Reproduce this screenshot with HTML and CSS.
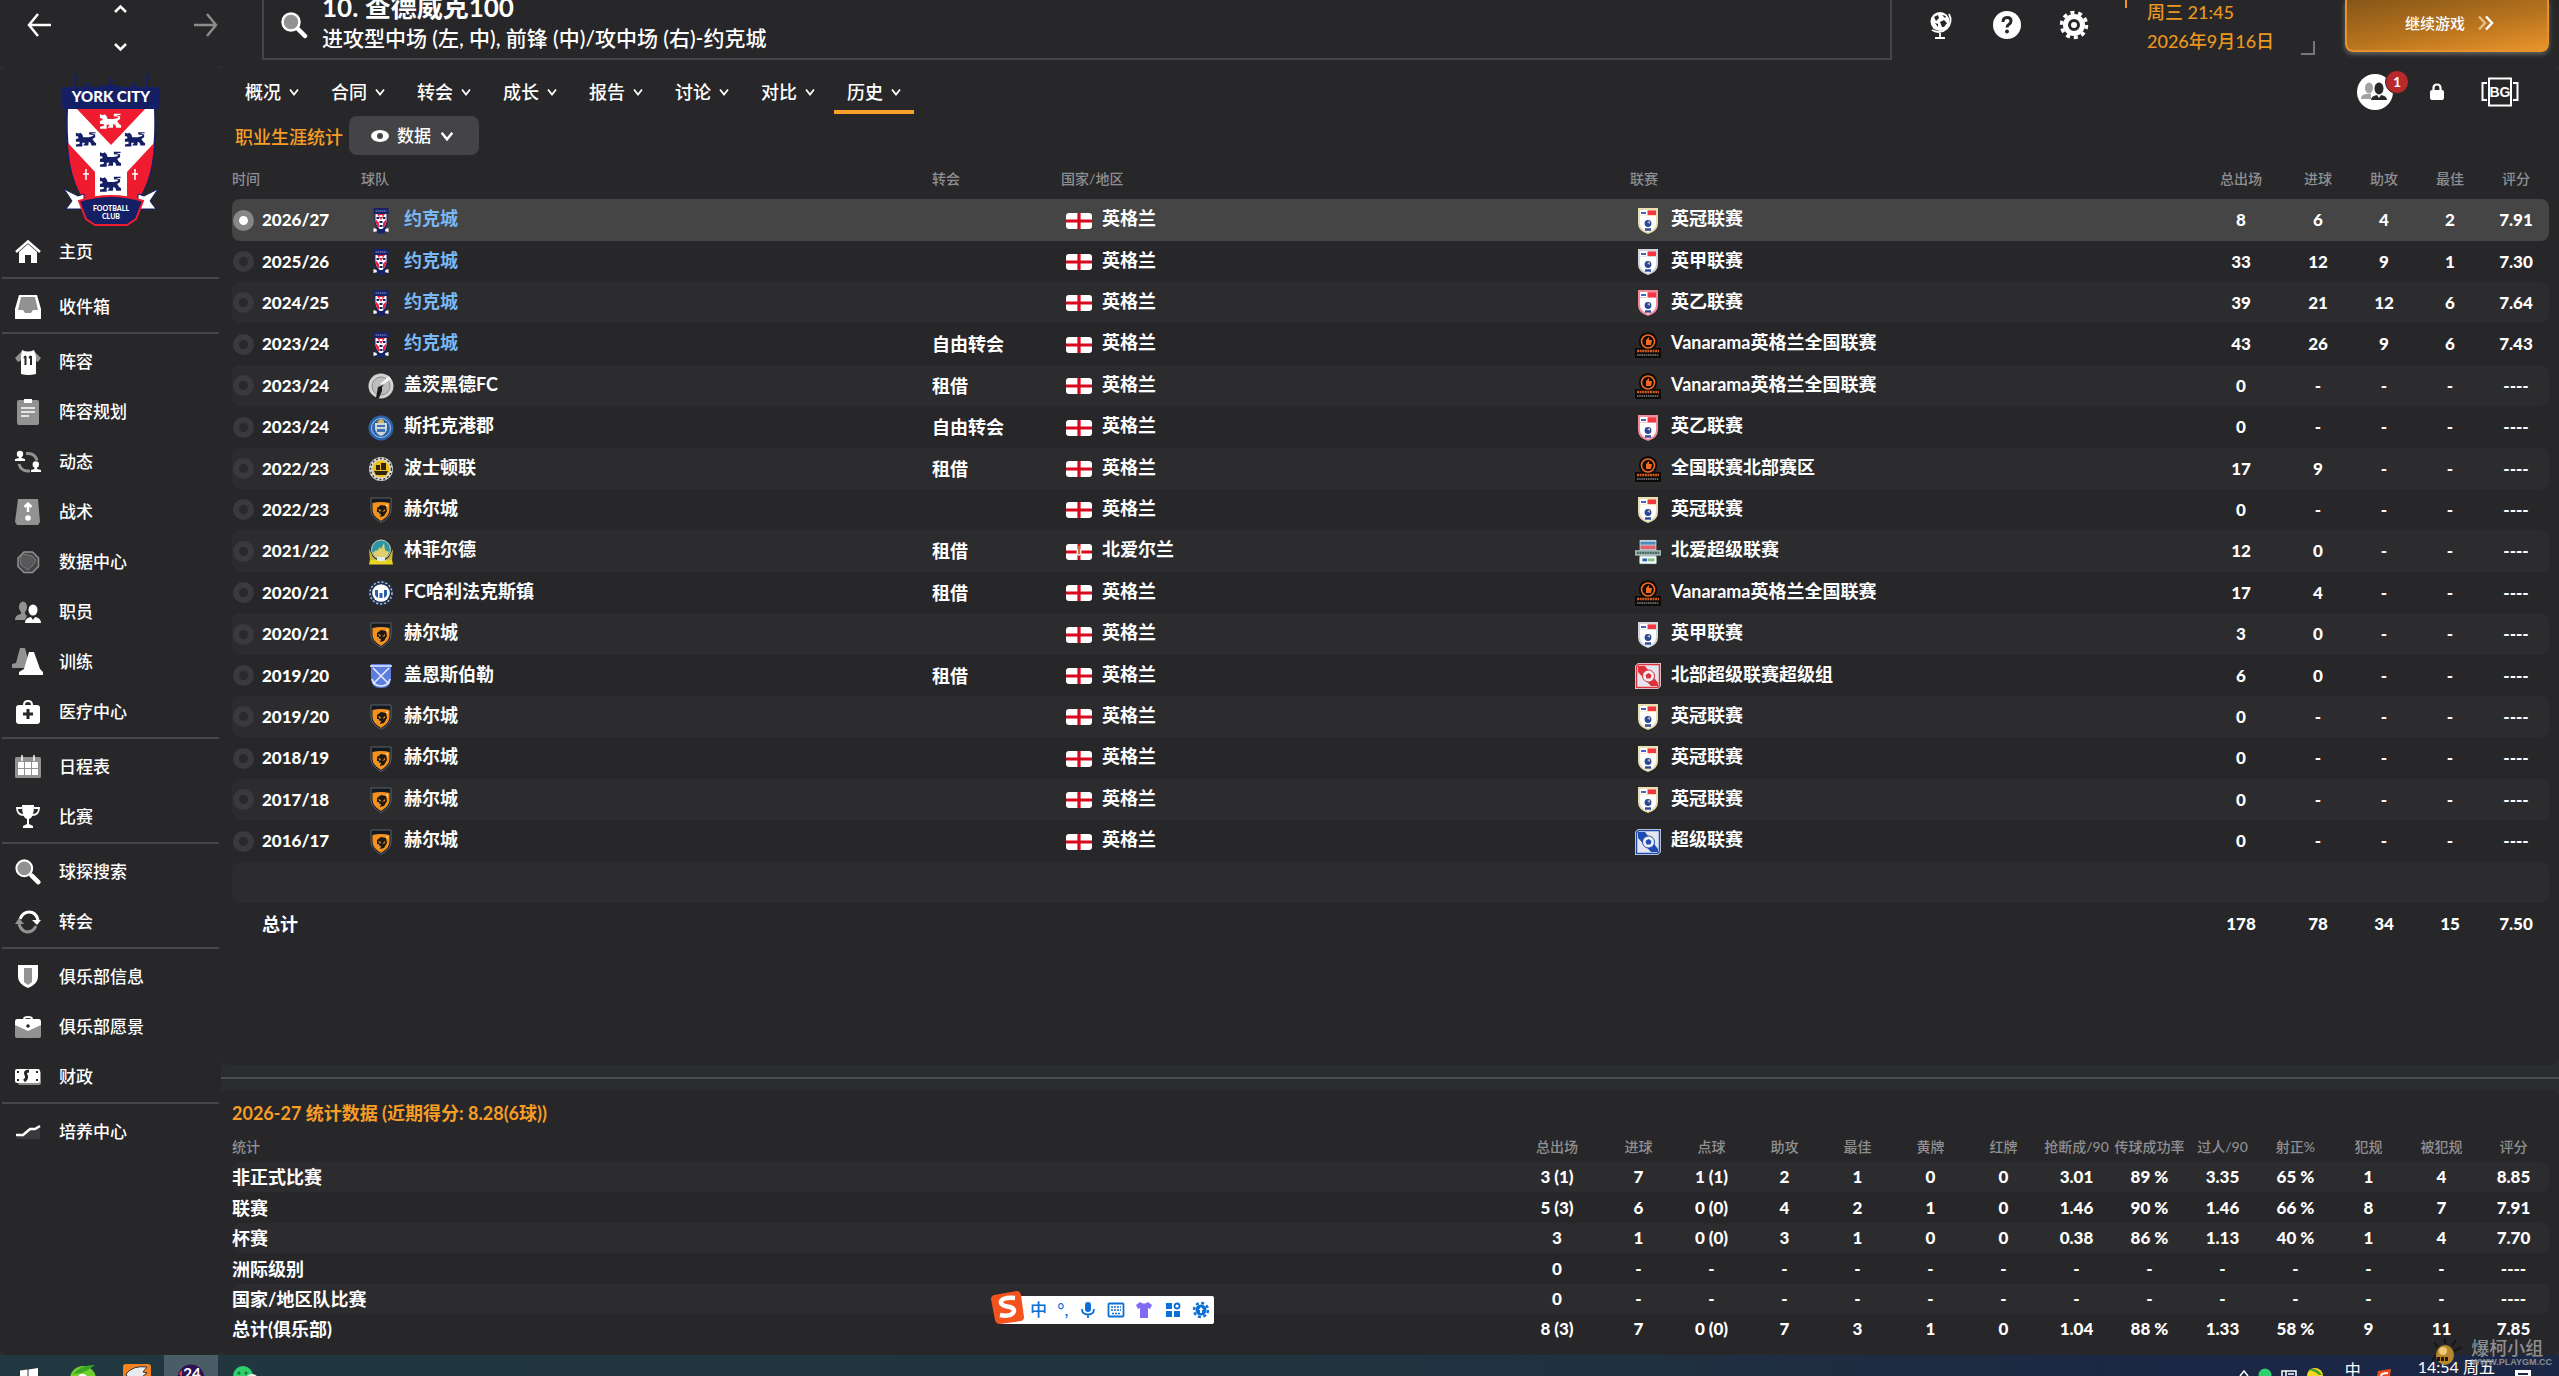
FILE: index.html
```html
<!DOCTYPE html>
<html lang="zh-CN">
<head>
<meta charset="utf-8">
<meta name="viewport" content="width=device-width, initial-scale=1">
<title>查德威克 - 历史</title>
<link rel="stylesheet" href="styles.css">
</head>
<body>
<svg class="sprite" aria-hidden="true">
  <symbol id="chev" viewBox="0 0 12 12"><path d="M2 3.500 6 8.500 10 3.500" fill="none" stroke="currentColor" stroke-width="1.800"/></symbol>
  <symbol id="lion" viewBox="0 0 24 17"><path d="M1 1l3 1 2-1 2 2 1 3h6l4-1 1.500-1.500-5-.5V0.500h7v1.200h-5l4.500 1.300v3l-3 2 2 3 2 1.500V15h-5l-1-3-2-1-.5 4H9l2-3H8v4H1v-2l4-1v-2H1V8l3-1-1-2H1z"/></symbol>
  <symbol id="york" viewBox="0 0 17 26"><path d="M1 0h15v5l-1 1v8q-1 6-4 9l-2 2h-1l-2-2q-3-3-4-9V6L1 5z" fill="#16236b"/><path d="M3 6h11v7q-1 6-5.500 9Q4 19 3 13z" fill="#fff"/><path d="M4.500 6h8l-4 6zM3 11l3.500 4v5Q3 17 3 11zM14 11l-3.500 4v5Q14 17 14 11z" fill="#e8203a"/><path d="M4 9h2.500v2H4zM10.500 9H13v2h-2.500zM7 13h3v2H7zM7 17h3v2H7z" fill="#16236b"/><path d="M7 7h3v2H7z" fill="#fff"/><path d="M3 3h11" stroke="#8f98c8" stroke-dasharray="1.500 .5"/><path d="M1 20l3 1h9l3-1v4l-4-1-3 1H8l-3-1-4 1z" fill="#fff"/><path d="M4 21h9l-1 4.500H5z" fill="#16236b"/></symbol>
  <symbol id="gates" viewBox="0 0 26 26"><circle cx="13" cy="13" r="12.500" fill="#d2d2d0"/><circle cx="13" cy="13" r="9" fill="#bdbdbb" stroke="#8b8b89"/><path d="M8 25l2-11 3-1 7-7-6 8 0 4-3 7z" fill="#1c1c1c"/><path d="M12 11l9-8 2 3-8 6z" fill="#f2f2f2"/></symbol>
  <symbol id="stock" viewBox="0 0 26 26"><circle cx="13" cy="13" r="12.500" fill="#2b62ac"/><circle cx="13" cy="13" r="9.500" fill="none" stroke="#a9c4e2"/><path d="M7 8h12v6q-1 5-6 7-5-2-6-7z" fill="#cfd6d6"/><path d="M9 10h8v2H9zM9 14h8v3H9z" fill="#3c72b5"/><path d="M10 6l3-2 3 2v2h-6z" fill="#d6b45c"/></symbol>
  <symbol id="boston" viewBox="0 0 26 26"><circle cx="13" cy="13" r="12" fill="#d8d8d4"/><circle cx="13" cy="13" r="10.500" fill="none" stroke="#3a3a38" stroke-width="1.500" stroke-dasharray="2 2"/><circle cx="13" cy="13" r="8.500" fill="#f0bf16"/><path d="M6 15h14l-2 4H8zM8 9h4v5H8zM13 7h5v7h-5z" fill="#2a2410"/></symbol>
  <symbol id="hull" viewBox="0 0 26 26"><path d="M3 1h20v12q0 7-10 12.500Q3 20 3 13z" fill="#14181f" stroke="#596270"/><path d="M4.500 6q8.500-2 17 0v7q0 6-8.500 11-8.500-5-8.500-11z" fill="#f5921e"/><path d="M9 11l4-3 5 1 1 5-3 5-4 1 1-3-4-1z" fill="#1c1a18"/><path d="M10 12l3 1-1 2zM14 15l3-3 0 2z" fill="#f5921e"/><path d="M18 8l1.500-1 0 3zM9 15l1.500 0 0 2z" fill="#fff"/></symbol>
  <symbol id="linfield" viewBox="0 0 26 26"><circle cx="13" cy="10.500" r="9.500" fill="#2f95a3" stroke="#c3d4cc"/><path d="M5 14l3-3 1 1 3-4 1 2 3-6 1 7 4 2-2 5H7z" fill="#e0cf6c"/><path d="M1 10l4 8 4 3-7 1zM25 10l-4 8-4 3 7 1z" fill="#c9b83c"/><path d="M2 21h22l1 4.500H1z" fill="#e9d422"/><path d="M9 18h8v4H9z" fill="#dfe9ee"/></symbol>
  <symbol id="halifax" viewBox="0 0 26 26"><circle cx="13" cy="13" r="12.500" fill="#1d3150"/><circle cx="13" cy="13" r="11" fill="none" stroke="#b8c4d2" stroke-width="1.500" stroke-dasharray="2 2"/><circle cx="13" cy="13" r="8.800" fill="#fff"/><path d="M7 10h3v8q-2-1-3-3zM16 10h3v5q-1 2-3 3zM11.500 13h3v5h-3z" fill="#2a5ea8"/></symbol>
  <symbol id="gains" viewBox="0 0 26 26"><path d="M3 1h20v14q0 10-10 10T3 15z" fill="#5c7de0"/><path d="M2 3h22M5 21L21 5M5 5l16 16M4 16q2 7 9 7t9-7" fill="none" stroke="#e4ebff" stroke-width="1.600"/></symbol>
  <symbol id="eng" viewBox="0 0 26 16"><rect width="26" height="16" rx="3" fill="#fff"/><path d="M0 8h26M13 0v16" stroke="#d8081f" stroke-width="3.200"/></symbol>
  <symbol id="nir" viewBox="0 0 26 16"><rect width="26" height="16" rx="3" fill="#fff"/><path d="M0 8h26M13 0v16" stroke="#d8081f" stroke-width="3"/><path d="M13 4l2.500 2v4L13 12l-2.500-2V6z" fill="#f0e6de"/><path d="M13 2v8" stroke="#c87038" stroke-width="2"/></symbol>
  <symbol id="efl" viewBox="0 0 26 26"><path d="M3 0h20v15q0 8-10 11Q3 23 3 15z" fill="currentColor"/><path d="M5 8h16v7q0 6-8 9-8-3-8-9z" fill="#fff"/><path d="M5 2h8v5.500H5z" fill="#fff"/><path d="M12.500 2.500h8.500v4.500h-8.500z" fill="#f3363f"/><path d="M6 5h5" stroke="#4066c8" stroke-width="2"/><circle cx="13" cy="15.500" r="3.400" fill="#2b4796"/><path d="M12 14l3-1 0 3z" fill="#d9c17e"/><path d="M10 21.500h6" stroke="#2b4796" stroke-width="2.400"/></symbol>
  <symbol id="van" viewBox="0 0 26 26"><path d="M13 0q9 1 9 9 0 4-2 7h6v10H0V16h6Q4 13 4 9 4 1 13 0z" fill="#0c0a09"/><circle cx="13" cy="9.500" r="6.500" fill="none" stroke="#f26a1c" stroke-width="1.600"/><path d="M11 8l3-3v3h3l-1 5h-5z" fill="#f26a1c"/><path d="M2 19h22" stroke="#d35a18" stroke-width="2.400" stroke-dasharray="2 .6"/><path d="M2 23h22" stroke="#858585" stroke-width="1.400" stroke-dasharray="1.500 .7"/></symbol>
  <symbol id="nifl" viewBox="0 0 28 26"><path d="M5 0h18v26H5z" fill="#b9d3dc"/><path d="M6 2h16v3H6z" fill="#4f8cbc"/><path d="M6 6h16v4H6z" fill="#e8606a"/><path d="M0 11h28v6H0z" fill="#9fb5ad"/><path d="M2 14h24" stroke="#40605a" stroke-width="2.400" stroke-dasharray="2 .8"/><path d="M5 18h18v7H5z" fill="#f5f7f5"/><path d="M8 21.500h5" stroke="#2860a8" stroke-width="3"/><path d="M14 21.500h7" stroke="#7fbf7a" stroke-width="3"/></symbol>
  <symbol id="card" viewBox="0 0 26 26"><path d="M3 0h23v23l-3 3H0V3z" fill="#e3e6ee"/><path d="M3.500 1.500h21v21l-2 2h-21v-21z" fill="none" stroke="currentColor" stroke-width="1.500"/><path d="M3 3h7l13 17v3h-7L3 9z" fill="currentColor"/><circle cx="13.500" cy="13" r="6" fill="#eef0f6" stroke="currentColor"/><path d="M13.500 10l3 2-1 3.500h-4l-1-3.500z" fill="currentColor"/></symbol>
</svg>

<div class="app">
<header class="top">
  <nav class="history-nav" aria-label="前进后退">
    <button class="icon-btn" aria-label="后退"><svg width="24" height="26" viewBox="0 0 24 26"><path d="M11 2 2 13l9 11M2 13h22" fill="none" stroke="#fff" stroke-width="2.500"/></svg></button>
    <div class="updown">
      <button class="icon-btn" aria-label="上一个"><svg width="15" height="10" viewBox="0 0 15 10"><path d="M2 8l5.500-5.500L13 8" fill="none" stroke="#fff" stroke-width="2.500"/></svg></button>
      <button class="icon-btn" aria-label="下一个"><svg width="15" height="10" viewBox="0 0 15 10"><path d="M2 2l5.500 5.500L13 2" fill="none" stroke="#fff" stroke-width="2.500"/></svg></button>
    </div>
    <button class="icon-btn" aria-label="前进"><svg width="24" height="26" viewBox="0 0 24 26"><path d="M13 2l9 11-9 11M22 13H0" fill="none" stroke="#8b8b8c" stroke-width="2.500"/></svg></button>
  </nav>
  <div class="title-box">
    <svg class="search" width="28" height="28" viewBox="0 0 28 28"><circle cx="11" cy="11" r="8.500" fill="#929292" stroke="#fff" stroke-width="2.500"/><path d="M18 18l7 7" stroke="#fff" stroke-width="4.500" stroke-linecap="round"/></svg>
    <div>
      <h1>10. 查德威克100</h1>
      <p>进攻型中场 (左, 中), 前锋 (中)/攻中场 (右)-约克城</p>
    </div>
  </div>
  <div class="tools">
    <button class="icon-btn" aria-label="世界"><svg width="28" height="30" viewBox="0 0 28 30"><circle cx="13" cy="11.500" r="9.500" fill="#fff"/><path d="M7 7l4-2 1 3-3 3zM13 12l4-2 3 3-3 4-2 0zM8 13l3 1 0 3zM15 5l4 1-1 2z" fill="#27272a"/><path d="M22 4a12 12 0 0 1-17 16M13 23v4M8 28h10" fill="none" stroke="#fff" stroke-width="1.800"/></svg></button>
    <button class="icon-btn" aria-label="帮助"><svg width="30" height="30" viewBox="0 0 30 30"><circle cx="15" cy="15" r="14" fill="#fff"/><path d="M11 12q0-4.500 4-4.500t4 3.500q0 2-2 3.200t-2 3.300" fill="none" stroke="#27272a" stroke-width="3"/><circle cx="15" cy="21.500" r="2" fill="#27272a"/></svg></button>
    <button class="icon-btn" aria-label="设置"><svg width="30" height="30" viewBox="0 0 30 30"><circle cx="15" cy="15" r="11" fill="#fff"/><circle cx="15" cy="15" r="12.500" fill="none" stroke="#fff" stroke-width="3.500" stroke-dasharray="4 3.850"/><circle cx="15" cy="15" r="4.500" fill="none" stroke="#27272a" stroke-width="3"/></svg></button>
  </div>
  <div class="date">
    <time datetime="2026-09-16T21:45">周三 21:45<br>2026年9月16日</time>
  </div>
  <button class="continue">继续游戏
    <svg width="18" height="16" viewBox="0 0 18 16"><path d="M2 1.500 8 8l-6 6.500" fill="none" stroke="#e6bd83" stroke-width="2.500"/><path d="M9 1.500 15 8l-6 6.500" fill="none" stroke="#fff" stroke-width="2.500"/></svg>
  </button>
</header>

<div class="body">
<aside class="side">
  <svg class="crest" width="98" height="154" viewBox="0 0 98 154" role="img" aria-label="York City Football Club">
    <path d="M0 14h24v-4h4v4h12v-2h18v2h12v-4h4v4h24v20l-5 4H5l-5-4zM13 0l2 5-1 2v8h-2V7l-1-2zM49 3l2 5-1 2v6h-2v-6l-1-2zM85 0l2 5-1 2v8h-2V7l-1-2z" fill="#141f66"/>
    <path d="M4 36h90q2 50-9 76-12 26-36 38Q25 138 13 112 2 86 4 36z" fill="#141f66"/>
    <path d="M6 36h86q2 48-9 74-10 24-34 36Q25 134 15 110 4 84 6 36z" fill="#fff"/>
    <path d="M15 36h68L49 72zM6 70l27 29v40Q8 118 6 70zM92 70L65 99v40Q90 118 92 70z" fill="#ee1c2e"/>
    <g fill="#141f66"><use href="#lion" x="13" y="58" width="22" height="17"/><use href="#lion" x="62" y="58" width="22" height="17"/><use href="#lion" x="37" y="78" width="23" height="17"/><use href="#lion" x="37" y="103" width="23" height="17"/></g>
    <use href="#lion" x="37" y="40" width="23" height="17" fill="#fff"/>
    <path d="M24 96v11M21 101h6M73 96v11M70 101h6" stroke="#fff" stroke-width="1.500"/>
    <path d="M2 116l14 7 6-2v15l-18 0 6-8zM96 116l-14 7-6-2v15h18l-6-8z" fill="#fff" stroke="#141f66"/>
    <path d="M17 128q32-10 64 0l-7 18-9 6H33l-9-6z" fill="#141f66" stroke="#ee1c2e" stroke-width="2"/>
    <text x="49" y="29" class="crest-name">YORK CITY</text>
    <text x="49" y="138" class="crest-sub">FOOTBALL</text>
    <text x="49" y="146" class="crest-sub">CLUB</text>
  </svg>
  <ul class="menu">
    <li><a href="#"><svg viewBox="0 0 26 26"><path d="M13 5l9 8v11h-6v-8h-6v8H4V13z" fill="#fff"/><path d="M1 13L13 2.500 25 13" fill="none" stroke="#fff" stroke-width="2.500"/></svg>主页</a></li>
    <li class="sep"><a href="#"><svg viewBox="0 0 26 26"><path d="M4 1h18l4 14v10H0V15z" fill="#fff"/><path d="M6 3h14l3 13h-5l-2 3h-6l-2-3H3z" fill="#929292"/></svg>收件箱</a></li>
    <li class="sep"><a href="#"><svg viewBox="0 0 26 26"><path d="M7 2L0 9l3 4 4-2zM19 2l7 7-3 4-4-2z" fill="#929292"/><path d="M7 1q6 3 12 0l2 6v18q-8 2-15 0V7z" fill="#fff"/><path d="M10.500 7v9M16 7v9M9 9l2-2M14 9l2-2" stroke="#27272a" stroke-width="2" fill="none"/></svg>阵容</a></li>
    <li><a href="#"><svg viewBox="0 0 26 26"><rect x="2" y="1" width="22" height="25" rx="2" fill="#929292"/><rect x="9" y="0" width="8" height="4" fill="#fff"/><path d="M6 9h14M6 13h14M6 17h8" stroke="#fff" stroke-width="1.500"/></svg>阵容规划</a></li>
    <li><a href="#"><svg viewBox="0 0 26 26"><path d="M11 4.500q9-1 11 7M15 22q-9 1-11-7" fill="none" stroke="#929292" stroke-width="3"/><circle cx="5" cy="5" r="3.200" fill="#fff"/><path d="M4 7h2.500v2l3.500 1v2H0v-2l4-1zM19.500 18H22v2l4 1v2H16v-2l3.500-1z" fill="#fff"/><circle cx="20.800" cy="15.500" r="3.200" fill="#fff"/></svg>动态</a></li>
    <li><a href="#"><svg viewBox="0 0 26 26"><path d="M3 0h20l2 23-2 3H2l-2-3z" fill="#929292"/><circle cx="13" cy="19" r="2.800" fill="#fff"/><path d="M13 13V5M9.500 8L13 4.500 16.500 8" fill="none" stroke="#fff" stroke-width="2.500"/></svg>战术</a></li>
    <li><a href="#"><svg viewBox="0 0 26 26"><path d="M9 3h8.500l6 6v8.500l-6 6H9l-6-6V9z" fill="#454547" stroke="#929292" stroke-width="1.500"/><path d="M8 5l9 2 4 4-3 5-5 5-7-5-1-6z" fill="#58585a" stroke="#7a7a7c"/></svg>数据中心</a></li>
    <li><a href="#"><svg viewBox="0 0 26 26"><ellipse cx="8" cy="8" rx="4" ry="5.500" fill="#929292"/><path d="M0 21q0-5 6-6v-3h4v3l2 2-2 4z" fill="#929292"/><ellipse cx="18" cy="11" rx="4.500" ry="5.500" fill="#fff"/><path d="M10 24q0-5 6-6l2 3 2-3q6 1 6 6z" fill="#fff"/></svg>职员</a></li>
    <li><a href="#"><svg class="wide" viewBox="0 0 32 28"><path d="M8 0h5l4 15v5H0v-4l4-1z" fill="#929292"/><path d="M17 4h5l6 17 3 3v3H7v-3l5-3z" fill="#fff"/></svg>训练</a></li>
    <li><a href="#"><svg viewBox="0 0 26 26"><rect x="1" y="6" width="24" height="19" rx="3" fill="#fff"/><path d="M9 6q0-4 4-4t4 4" fill="none" stroke="#fff" stroke-width="2"/><path d="M13 10v10M8 15h10" stroke="#27272a" stroke-width="3"/></svg>医疗中心</a></li>
    <li class="sep"><a href="#"><svg viewBox="0 0 26 26"><rect x="0" y="3" width="26" height="21" rx="1.500" fill="#929292"/><path d="M7 1v6M19 1v6" stroke="#fff" stroke-width="1.500"/><path d="M3 8h6v6H3zM10 8h6v6h-6zM17 8h6v6h-6zM3 15h6v6H3zM10 15h6v6h-6zM17 15h6v6h-6z" fill="#fff"/></svg>日程表</a></li>
    <li><a href="#"><svg viewBox="0 0 26 26"><path d="M7 1h12q0 13-5 14v5l4 2v2H8v-2l4-2v-5Q7 14 7 1z" fill="#fff"/><path d="M7 4H2q0 7 7 7M19 4h5q0 7-7 7" fill="none" stroke="#fff" stroke-width="1.800"/></svg>比赛</a></li>
    <li class="sep"><a href="#"><svg viewBox="0 0 28 28"><circle cx="10" cy="10" r="8.500" fill="#929292" stroke="#fff" stroke-width="2.200"/><path d="M18 18l7 7" stroke="#fff" stroke-width="5" stroke-linecap="round"/></svg>球探搜索</a></li>
    <li><a href="#"><svg viewBox="0 0 26 26"><path d="M5 10q3-7 9-7 7 0 9 8" fill="none" stroke="#fff" stroke-width="3"/><path d="M17 11h9l-4 5z" fill="#fff"/><path d="M21 17q-3 6-9 6-6-1-8-8" fill="none" stroke="#929292" stroke-width="3"/><path d="M0 15h9l-5-6z" fill="#929292"/></svg>转会</a></li>
    <li class="sep"><a href="#"><svg viewBox="0 0 26 26"><path d="M3 1h20v12q0 7-10 11Q3 20 3 13z" fill="#fff"/><path d="M9 4h8v14l-4 3-4-3z" fill="#929292"/></svg>俱乐部信息</a></li>
    <li><a href="#"><svg viewBox="0 0 26 26"><path d="M0 8h26v14q0 2-2 2H2q-2 0-2-2z" fill="#929292"/><path d="M0 8q0-3 2-3h22q2 0 2 3v3l-13 6L0 11z" fill="#fff"/><path d="M9 5q0-2 4-2t4 2" fill="none" stroke="#fff" stroke-width="2"/><circle cx="13" cy="12" r="1.800" fill="#27272a"/></svg>俱乐部愿景</a></li>
    <li><a href="#"><svg viewBox="0 0 26 26"><rect x="3" y="7" width="23" height="14" rx="2" fill="#929292"/><rect x="0" y="5" width="25" height="14" rx="2" fill="#fff"/><path d="M14 7q-5 0-3 4 2 3-2 6" fill="none" stroke="#27272a" stroke-width="3"/><path d="M2 7h2v2H2zM21 7h2v2h-2zM2 15h2v2H2zM21 15h2v2h-2z" fill="#27272a"/></svg>财政</a></li>
    <li class="sep"><a href="#"><svg viewBox="0 0 26 26"><path d="M2 16h7l6-6h5l5-3v13H2z" fill="#3a3a3c"/><path d="M1 16h7l7-6h5l5-3" fill="none" stroke="#fff" stroke-width="2.500"/></svg>培养中心</a></li>
  </ul>
</aside>

<main class="main">
<section class="panel career">
  <div class="tabbar">
    <nav class="tabs">
      <a href="#">概况<svg><use href="#chev"/></svg></a>
      <a href="#">合同<svg><use href="#chev"/></svg></a>
      <a href="#">转会<svg><use href="#chev"/></svg></a>
      <a href="#">成长<svg><use href="#chev"/></svg></a>
      <a href="#">报告<svg><use href="#chev"/></svg></a>
      <a href="#">讨论<svg><use href="#chev"/></svg></a>
      <a href="#">对比<svg><use href="#chev"/></svg></a>
      <a href="#" class="on" aria-current="page">历史<svg><use href="#chev"/></svg></a>
    </nav>
    <div class="quick">
      <button class="icon-btn people" aria-label="职员"><svg width="36" height="36" viewBox="0 0 36 36"><circle cx="18" cy="18" r="18" fill="#fff"/><ellipse cx="12" cy="14" rx="4" ry="5.500" fill="#a2a2a2"/><path d="M4 25q0-5 6-5h4v5z" fill="#a2a2a2"/><ellipse cx="22" cy="14.500" rx="4.500" ry="6" fill="#27272a"/><path d="M14 26q0-4 6-5l2 3 2-3q6 1 6 5z" fill="#27272a"/></svg><span class="badge">1</span></button>
      <button class="icon-btn" aria-label="锁定"><svg width="16" height="18" viewBox="0 0 16 18"><rect x="1" y="7" width="14" height="10" rx="2" fill="#fff"/><path d="M4.500 8V5q0-3.500 3.500-3.500T11.500 5v3" fill="none" stroke="#fff" stroke-width="2.200"/></svg></button>
      <button class="icon-btn bg" aria-label="BG"><svg width="38" height="30" viewBox="0 0 38 30"><rect x="8" y="1.500" width="22" height="27" fill="none" stroke="#fff" stroke-width="2"/><path d="M6 6H1.500v17H6M32 6h4.500v17H32" fill="none" stroke="#fff" stroke-width="2"/><text x="19" y="20" text-anchor="middle">BG</text></svg></button>
    </div>
  </div>
  <div class="subbar">
    <h2>职业生涯统计</h2>
    <button class="filter"><svg width="18" height="14" viewBox="0 0 18 14"><ellipse cx="9" cy="7" rx="9" ry="6" fill="#fff"/><circle cx="9" cy="7" r="3" fill="#444446"/></svg>数据<svg width="16" height="16"><use href="#chev"/></svg></button>
  </div>
  <table class="career-table">
    <colgroup><col class="c-time"><col><col class="c-time"><col><col><col class="c-apps"><col class="c-num"><col class="c-num"><col class="c-num"><col class="c-num"></colgroup>
    <thead><tr><th>时间</th><th>球队</th><th>转会</th><th>国家/地区</th><th>联赛</th><th>总出场</th><th>进球</th><th>助攻</th><th>最佳</th><th>评分</th></tr></thead>
    <tbody>
      <tr class="sel"><td><label><input type="radio" name="s" checked>2026/27</label></td><td><svg><use href="#york"/></svg><a href="#">约克城</a></td><td></td><td><svg><use href="#eng"/></svg>英格兰</td><td><svg class="champ"><use href="#efl"/></svg>英冠联赛</td><td>8</td><td>6</td><td>4</td><td>2</td><td>7.91</td></tr>
      <tr><td><label><input type="radio" name="s">2025/26</label></td><td><svg><use href="#york"/></svg><a href="#">约克城</a></td><td></td><td><svg><use href="#eng"/></svg>英格兰</td><td><svg class="one"><use href="#efl"/></svg>英甲联赛</td><td>33</td><td>12</td><td>9</td><td>1</td><td>7.30</td></tr>
      <tr><td><label><input type="radio" name="s">2024/25</label></td><td><svg><use href="#york"/></svg><a href="#">约克城</a></td><td></td><td><svg><use href="#eng"/></svg>英格兰</td><td><svg class="two"><use href="#efl"/></svg>英乙联赛</td><td>39</td><td>21</td><td>12</td><td>6</td><td>7.64</td></tr>
      <tr><td><label><input type="radio" name="s">2023/24</label></td><td><svg><use href="#york"/></svg><a href="#">约克城</a></td><td>自由转会</td><td><svg><use href="#eng"/></svg>英格兰</td><td><svg><use href="#van"/></svg>Vanarama英格兰全国联赛</td><td>43</td><td>26</td><td>9</td><td>6</td><td>7.43</td></tr>
      <tr><td><label><input type="radio" name="s">2023/24</label></td><td><svg><use href="#gates"/></svg>盖茨黑德FC</td><td>租借</td><td><svg><use href="#eng"/></svg>英格兰</td><td><svg><use href="#van"/></svg>Vanarama英格兰全国联赛</td><td>0</td><td>-</td><td>-</td><td>-</td><td>----</td></tr>
      <tr><td><label><input type="radio" name="s">2023/24</label></td><td><svg><use href="#stock"/></svg>斯托克港郡</td><td>自由转会</td><td><svg><use href="#eng"/></svg>英格兰</td><td><svg class="two"><use href="#efl"/></svg>英乙联赛</td><td>0</td><td>-</td><td>-</td><td>-</td><td>----</td></tr>
      <tr><td><label><input type="radio" name="s">2022/23</label></td><td><svg><use href="#boston"/></svg>波士顿联</td><td>租借</td><td><svg><use href="#eng"/></svg>英格兰</td><td><svg><use href="#van"/></svg>全国联赛北部赛区</td><td>17</td><td>9</td><td>-</td><td>-</td><td>----</td></tr>
      <tr><td><label><input type="radio" name="s">2022/23</label></td><td><svg><use href="#hull"/></svg>赫尔城</td><td></td><td><svg><use href="#eng"/></svg>英格兰</td><td><svg class="champ"><use href="#efl"/></svg>英冠联赛</td><td>0</td><td>-</td><td>-</td><td>-</td><td>----</td></tr>
      <tr><td><label><input type="radio" name="s">2021/22</label></td><td><svg><use href="#linfield"/></svg>林菲尔德</td><td>租借</td><td><svg><use href="#nir"/></svg>北爱尔兰</td><td><svg><use href="#nifl"/></svg>北爱超级联赛</td><td>12</td><td>0</td><td>-</td><td>-</td><td>----</td></tr>
      <tr><td><label><input type="radio" name="s">2020/21</label></td><td><svg><use href="#halifax"/></svg>FC哈利法克斯镇</td><td>租借</td><td><svg><use href="#eng"/></svg>英格兰</td><td><svg><use href="#van"/></svg>Vanarama英格兰全国联赛</td><td>17</td><td>4</td><td>-</td><td>-</td><td>----</td></tr>
      <tr><td><label><input type="radio" name="s">2020/21</label></td><td><svg><use href="#hull"/></svg>赫尔城</td><td></td><td><svg><use href="#eng"/></svg>英格兰</td><td><svg class="one"><use href="#efl"/></svg>英甲联赛</td><td>3</td><td>0</td><td>-</td><td>-</td><td>----</td></tr>
      <tr><td><label><input type="radio" name="s">2019/20</label></td><td><svg><use href="#gains"/></svg>盖恩斯伯勒</td><td>租借</td><td><svg><use href="#eng"/></svg>英格兰</td><td><svg class="red"><use href="#card"/></svg>北部超级联赛超级组</td><td>6</td><td>0</td><td>-</td><td>-</td><td>----</td></tr>
      <tr><td><label><input type="radio" name="s">2019/20</label></td><td><svg><use href="#hull"/></svg>赫尔城</td><td></td><td><svg><use href="#eng"/></svg>英格兰</td><td><svg class="champ"><use href="#efl"/></svg>英冠联赛</td><td>0</td><td>-</td><td>-</td><td>-</td><td>----</td></tr>
      <tr><td><label><input type="radio" name="s">2018/19</label></td><td><svg><use href="#hull"/></svg>赫尔城</td><td></td><td><svg><use href="#eng"/></svg>英格兰</td><td><svg class="champ"><use href="#efl"/></svg>英冠联赛</td><td>0</td><td>-</td><td>-</td><td>-</td><td>----</td></tr>
      <tr><td><label><input type="radio" name="s">2017/18</label></td><td><svg><use href="#hull"/></svg>赫尔城</td><td></td><td><svg><use href="#eng"/></svg>英格兰</td><td><svg class="champ"><use href="#efl"/></svg>英冠联赛</td><td>0</td><td>-</td><td>-</td><td>-</td><td>----</td></tr>
      <tr><td><label><input type="radio" name="s">2016/17</label></td><td><svg><use href="#hull"/></svg>赫尔城</td><td></td><td><svg><use href="#eng"/></svg>英格兰</td><td><svg class="blue"><use href="#card"/></svg>超级联赛</td><td>0</td><td>-</td><td>-</td><td>-</td><td>----</td></tr>
      <tr><td></td><td></td><td></td><td></td><td></td><td></td><td></td><td></td><td></td><td></td></tr>
      <tr class="total"><td>总计</td><td></td><td></td><td></td><td></td><td>178</td><td>78</td><td>34</td><td>15</td><td>7.50</td></tr>
    </tbody>
  </table>
</section>

<hr class="divider">

<section class="panel season">
  <h2>2026-27 统计数据 (近期得分: 8.28(6球))</h2>
  <table class="season-table">
    <colgroup><col><col class="s-apps"><col class="s-num" span="12"><col class="s-last"></colgroup>
    <thead><tr><th>统计</th><th>总出场</th><th>进球</th><th>点球</th><th>助攻</th><th>最佳</th><th>黄牌</th><th>红牌</th><th>抢断成/90</th><th>传球成功率</th><th>过人/90</th><th>射正%</th><th>犯规</th><th>被犯规</th><th>评分</th></tr></thead>
    <tbody>
      <tr><td>非正式比赛</td><td>3 (1)</td><td>7</td><td>1 (1)</td><td>2</td><td>1</td><td>0</td><td>0</td><td>3.01</td><td>89 %</td><td>3.35</td><td>65 %</td><td>1</td><td>4</td><td>8.85</td></tr>
      <tr><td>联赛</td><td>5 (3)</td><td>6</td><td>0 (0)</td><td>4</td><td>2</td><td>1</td><td>0</td><td>1.46</td><td>90 %</td><td>1.46</td><td>66 %</td><td>8</td><td>7</td><td>7.91</td></tr>
      <tr><td>杯赛</td><td>3</td><td>1</td><td>0 (0)</td><td>3</td><td>1</td><td>0</td><td>0</td><td>0.38</td><td>86 %</td><td>1.13</td><td>40 %</td><td>1</td><td>4</td><td>7.70</td></tr>
      <tr><td>洲际级别</td><td>0</td><td>-</td><td>-</td><td>-</td><td>-</td><td>-</td><td>-</td><td>-</td><td>-</td><td>-</td><td>-</td><td>-</td><td>-</td><td>----</td></tr>
      <tr><td>国家/地区队比赛</td><td>0</td><td>-</td><td>-</td><td>-</td><td>-</td><td>-</td><td>-</td><td>-</td><td>-</td><td>-</td><td>-</td><td>-</td><td>-</td><td>----</td></tr>
      <tr><td>总计(俱乐部)</td><td>8 (3)</td><td>7</td><td>0 (0)</td><td>7</td><td>3</td><td>1</td><td>0</td><td>1.04</td><td>88 %</td><td>1.33</td><td>58 %</td><td>9</td><td>11</td><td>7.85</td></tr>
    </tbody>
  </table>
</section>
</main>
</div>

<footer class="taskbar">
  <div class="apps">
    <button class="task" aria-label="开始"><svg width="18" height="18" viewBox="0 0 18 18"><path d="M0 2.500 7.500 1.500V8.500H0zM8.500 1.400 18 0v8.500H8.500zM0 9.500h7.500v7L0 15.500zM8.500 9.500H18V18l-9.500-1.400z" fill="#fff"/></svg></button>
    <button class="task" aria-label="浏览器"><svg width="28" height="28" viewBox="0 0 28 28"><circle cx="14" cy="15" r="13" fill="#6fcf2e"/><path d="M4 10q8-9 22-9-6 5-14 8z" fill="#3aa626"/><path d="M8 15q1-6 7-5 4 1 3 5z" fill="#fff"/></svg></button>
    <button class="task" aria-label="截图"><svg width="28" height="28" viewBox="0 0 28 28"><rect width="28" height="28" rx="3" fill="#f5811f"/><path d="M3 10Q10 1 24 3l-4 5 4 1-9 7-4-4-5 5z" fill="#e8ebee" stroke="#30353a"/></svg></button>
    <button class="task active" aria-label="FM24"><svg width="28" height="28" viewBox="0 0 28 28"><circle cx="14" cy="14" r="13.500" fill="#2c1254"/><path d="M2 10a13 13 0 0 1 3-4l0 7z" fill="#f0452c"/><text x="15" y="15" text-anchor="middle">24</text></svg></button>
    <button class="task" aria-label="微信"><svg width="28" height="28" viewBox="0 0 28 28"><circle cx="12" cy="12" r="10" fill="#2fd06a"/><circle cx="8" cy="9" r="1.500" fill="#14713a"/><circle cx="15" cy="9" r="1.500" fill="#14713a"/><circle cx="21" cy="17" r="7" fill="#e9f5ec"/></svg></button>
  </div>
  <div class="tray">
    <svg width="10" height="20" viewBox="0 0 10 20"><path d="M1 20l4-5 4 5" fill="none" stroke="#fff" stroke-width="1.500"/></svg>
    <svg width="14" height="20" viewBox="0 0 14 20"><circle cx="7" cy="19" r="6.500" fill="#2fd070"/></svg>
    <svg width="16" height="20" viewBox="0 0 16 20"><path d="M1 20v-5h14v5M5 15v5M7 18h6" fill="none" stroke="#fff" stroke-width="1.500"/></svg>
    <svg width="18" height="20" viewBox="0 0 18 20"><circle cx="9" cy="20" r="8" fill="#f5d91c"/><path d="M3 14q6-4 13 5l-3 0q-4-4-10-5z" fill="#3da030"/></svg>
    <span class="ime">中</span>
    <svg width="15" height="20" viewBox="0 0 15 20"><path d="M2 15l13-2-1 7H1z" fill="#f0491c"/><path d="M5 20q0-3 7-3" stroke="#fff" stroke-width="2" fill="none"/></svg>
    <time class="clock">14:54 周五</time>
    <svg width="18" height="20" viewBox="0 0 18 20"><path d="M1 14h16v6H1z" fill="#fff"/><path d="M4 18h10" stroke="#1b2744" stroke-width="2"/></svg>
  </div>
</footer>

<div class="ime-bar">
  <svg class="sogou" width="34" height="34" viewBox="0 0 34 34"><path d="M4 5 27 1q3 0 4 4l3 22q0 3-3 4L10 34q-4 0-5-4L1 9q0-3 3-4z" fill="#f4531f"/><path d="M25 8Q10 7 11 13q1 3 9 4 6 2 3 6-3 4-13 2" fill="none" stroke="#fff" stroke-width="4.500"/></svg>
  <span>中</span>
  <span>°,</span>
  <svg width="18" height="18" viewBox="0 0 18 18"><rect x="6" y="1" width="6" height="10" rx="3" fill="#0a6fd6"/><path d="M3 8q0 5.500 6 5.500T15 8M9 14v3" fill="none" stroke="#0a6fd6" stroke-width="1.800"/></svg>
  <svg width="18" height="18" viewBox="0 0 18 18"><rect x="1.500" y="2.500" width="15" height="13" rx="1" fill="none" stroke="#0a6fd6" stroke-width="1.800"/><path d="M4 6h10M4 9h10M5 12.500h8" stroke="#0a6fd6" stroke-width="1.600" stroke-dasharray="2 1"/></svg>
  <svg width="18" height="18" viewBox="0 0 18 18"><path d="M5 1q4 3 8 0l4 3-2 4-2-1v10H5V7L3 8 1 4z" fill="#7f6cf2"/></svg>
  <svg width="18" height="18" viewBox="0 0 18 18"><path d="M2 2h6v6H2zM2 10h6v6H2zM10 10h6v6h-6z" fill="#0a6fd6"/><circle cx="13" cy="5" r="2.500" fill="none" stroke="#0a6fd6" stroke-width="1.800"/></svg>
  <svg width="18" height="18" viewBox="0 0 18 18"><circle cx="9" cy="9" r="5.500" fill="#0a6fd6"/><circle cx="9" cy="9" r="7" fill="none" stroke="#0a6fd6" stroke-width="2.500" stroke-dasharray="3 2.500"/><path d="M9 6l2.500 3h-1.500v3H8V9H6.500z" fill="#fff"/></svg>
</div>

<div class="mark">
  <svg width="36" height="32" viewBox="0 0 36 32"><path d="M10 10L6 6M17 7V1M24 9l4-6M26 14l8-4M4 24l4-6" stroke="#151515" stroke-width="2"/><ellipse cx="17" cy="18" rx="9" ry="10" fill="#b8862c"/><ellipse cx="15" cy="14" rx="4" ry="4" fill="#ecc878"/><path d="M9 22h12" stroke="#20180c" stroke-width="4" stroke-dasharray="3 1"/></svg>
  <p><b>爆柯小组</b><span>WWW.PLAYGM.CC</span></p>
</div>
</div>
</body>
</html>
```
FILE: styles.css
```css
* { box-sizing: border-box; }

body {
  margin: 0;
  background: #2b2c2e;
  color: #fff;
  font: 500 18px/24px Lato, "Noto Sans CJK SC", sans-serif;
}

h1, h2, p, ul { margin: 0; padding: 0; }
ul { list-style: none; }
a { color: inherit; text-decoration: none; }
button { font: inherit; color: inherit; border: 0; background: none; padding: 0; cursor: pointer; }
.icon-btn { display: flex; }
.sprite { position: absolute; width: 0; height: 0; }

.app {
  position: relative;
  display: flex;
  flex-direction: column;
  min-height: 100vh;
  overflow: hidden;
}

/* top bar */
.top {
  display: flex;
  height: 66px;
  background: #27272a;
}
.history-nav {
  display: flex;
  justify-content: space-between;
  width: 262px;
  padding: 12px 44px 0 27px;
}
.updown {
  display: flex;
  flex-direction: column;
  gap: 28px;
  margin-top: -8px;
  padding-right: 4px;
}
.title-box {
  display: flex;
  flex: 1;
  gap: 14px;
  height: 60px;
  padding-left: 16px;
  border: 2px solid #454547;
  border-top: 0;
}
.search { margin-top: 11px; }
h1 { margin-top: -9px; font-size: 26px; line-height: 32px; font-weight: 700; }
.title-box p { font-size: 21px; line-height: 30px; }
.tools { display: flex; gap: 37px; padding: 10px 36px 0 35px; }
.date {
  position: relative;
  width: 190px;
  padding-left: 22px;
  color: #ea961f;
  line-height: 29px;
}
.date::before {
  content: "";
  position: absolute;
  left: 0;
  top: 0;
  width: 2px;
  height: 8px;
  background: #ea961f;
}
.date::after {
  content: "";
  position: absolute;
  right: 0;
  top: 41px;
  width: 12px;
  height: 12px;
  border: solid #77777a;
  border-width: 0 2px 2px 0;
}
.date time { display: block; margin-top: -2px; }
.continue {
  display: flex;
  align-items: center;
  justify-content: center;
  gap: 12px;
  width: 204px;
  height: 52px;
  margin: 0 10px 0 30px;
  padding: 0 0 4px 6px;
  border: 2px solid #e5922b;
  border-top: 0;
  border-radius: 0 0 8px 8px;
  background: linear-gradient(170deg, #855618, #b8741e 55%, #ea942b);
  box-shadow: 0 2px 5px #6b6b6b;
  font-size: 15px;
}

.body { display: flex; flex: 1; }

/* sidebar */
.side { width: 221px; padding: 7px 2px 0; background: #27272a; border-radius: 8px; }
.crest { display: block; margin-left: 60px; }
.crest-name { fill: #fff; font: 900 15px Lato; text-anchor: middle; }
.crest-sub { fill: #fff; font: 900 7px Lato; text-anchor: middle; }
.menu a {
  display: flex;
  align-items: center;
  gap: 18px;
  height: 50px;
  padding-left: 13px;
  font-size: 17px;
}
.menu svg { width: 26px; height: 26px; }
.menu svg.wide { width: 32px; height: 28px; margin: 0 -3px; }
.sep::before {
  content: "";
  display: block;
  height: 2px;
  margin-bottom: 3px;
  background: #47474a;
}

/* main column */
.main { display: flex; flex: 1; flex-direction: column; min-width: 0; }
.panel { padding: 0 10px 0 11px; background: #27272a; border-radius: 8px; }
.career { flex: 1; }
.tabbar { display: flex; justify-content: space-between; height: 50px; }
.tabs { display: flex; gap: 6px; }
.tabs a {
  display: flex;
  align-items: center;
  gap: 7px;
  width: 80px;
  height: 48px;
  padding: 8px 0 0 13px;
  border-bottom: 4px solid transparent;
}
.tabs .on { border-color: #f9a02a; }
.tabs svg { width: 12px; height: 12px; }
.quick { display: flex; align-items: center; gap: 36px; padding: 2px 30px 0 0; }
.people { position: relative; }
.badge {
  position: absolute;
  left: 28px;
  top: -4px;
  width: 24px;
  height: 24px;
  border: 1px solid #27272a;
  border-radius: 50%;
  background: #b9282b;
  font-size: 14px;
  font-weight: 700;
  line-height: 22px;
}
.bg text { fill: #fff; font: 700 14px "Liberation Sans", sans-serif; }
.subbar { display: flex; align-items: center; gap: 6px; height: 39px; padding-left: 3px; }
h2 { color: #f69d26; font-size: 18px; line-height: 24px; font-weight: 500; }
.subbar h2 { padding-top: 2px; }
.filter {
  display: flex;
  align-items: center;
  gap: 8px;
  height: 39px;
  padding: 0 24px 0 22px;
  border-radius: 8px;
  background: #444446;
  font-size: 17px;
}

/* tables */
table { width: 100%; border-collapse: collapse; table-layout: fixed; }
th, td { padding: 0; text-align: center; white-space: nowrap; }
th { color: #8f8f91; font-size: 14px; font-weight: 500; }
td { font-weight: 700; }
tbody tr:nth-child(odd) td { background: #2c2c2e; }
tbody td:first-child { border-radius: 8px 0 0 8px; }
tbody td:last-child { border-radius: 0 8px 8px 0; }

.career-table { margin-top: 4px; }
.career-table th { height: 40px; }
.career-table td { height: 41px; }
.career-table tr:nth-child(5n+1) td,
.career-table tr:nth-child(5n+4) td { height: 42px; }
.career-table :is(th, td):nth-child(-n+5) { text-align: left; }
.career-table :is(th, td):is(:nth-child(3), :nth-child(4), :nth-child(5)) { padding-left: 2px; }
.career-table td:is(:nth-child(2), :nth-child(4), :nth-child(5)) { padding-left: 7px; }
.career-table .sel td { background: #454545; }
.c-time { width: 129px; }
.c-apps { width: 88px; }
.c-num { width: 66px; }
td svg { width: 26px; height: 26px; margin-right: 10px; vertical-align: middle; }
td a { color: #7ab8f5; }
td label { display: flex; align-items: center; gap: 8px; padding-left: 1px; }
.career-table .total td:first-child { padding-left: 30px; }
td input {
  appearance: none;
  width: 21px;
  height: 21px;
  margin: 0;
  border: 6px solid #3a3a3c;
  border-radius: 50%;
  background: #29292b;
}
td input:checked { border-color: #868686; background: #fff; }
td label, .career-table td:nth-child(n+6), .season-table td:nth-child(n+2) {
  font-size: 17px;
  font-weight: 900;
}
.champ { color: #eadfb4; }
.one { color: #d3d6de; }
.two { color: #f08c9c; }
.red { color: #dd3038; }
.blue { color: #1f4bb0; }

.divider {
  width: 100%;
  height: 2px;
  margin: 12px 0 11px;
  border: 0;
  background: #4c4d4f;
}
.season { padding-top: 4px; padding-bottom: 11px; }
.season h2 { line-height: 38px; font-weight: 700; }
.season-table th { height: 30px; }
.season-table td { height: 30px; }
.season-table tr:nth-child(even) td { height: 31px; }
.season-table tr:last-child td { height: 30px; }
.season-table :is(th, td):first-child { text-align: left; }
.s-apps { width: 90px; }
.s-num { width: 73px; }
.s-last { width: 71px; }

/* desktop taskbar */
.taskbar {
  display: flex;
  justify-content: space-between;
  height: 21px;
  overflow: hidden;
  background: linear-gradient(90deg, #213840, #20323f 60%, #1b2744 85%);
}
.apps, .tray { display: flex; }
.apps { padding-left: 2px; }
.task { display: flex; justify-content: center; align-items: flex-start; width: 54px; height: 40px; padding-top: 9px; }
.task:first-child { padding-top: 13px; }
.active { background: #4a5d66; }
.task text { fill: #fff; font: 700 15px Lato; }
.tray { align-items: flex-end; gap: 9px; padding-right: 27px; font-weight: 400; }
.ime { margin: 0 6px 0 12px; font-size: 16px; line-height: 12px; }
.clock { margin: 0 10px 0 18px; font: 400 16px/18px Lato, "Noto Sans CJK SC", sans-serif; }

/* floating input-method bar */
.ime-bar {
  position: absolute;
  left: 999px;
  bottom: 52px;
  display: flex;
  align-items: center;
  justify-content: space-between;
  width: 215px;
  height: 28px;
  padding: 0 4px 0 31px;
  background: #fff;
  border-radius: 2px;
  color: #0a6fd6;
  font-size: 17px;
}
.sogou { position: absolute; left: -9px; bottom: 0; }

/* site mark */
.mark { position: absolute; right: 7px; bottom: 7px; display: flex; gap: 7px; align-items: center; color: #8d8e92; }
.mark b { display: block; font: 500 18px/18px "Noto Sans CJK SC", sans-serif; }
.mark span { display: block; font: 700 9px/12px "Liberation Sans", sans-serif; }
```
